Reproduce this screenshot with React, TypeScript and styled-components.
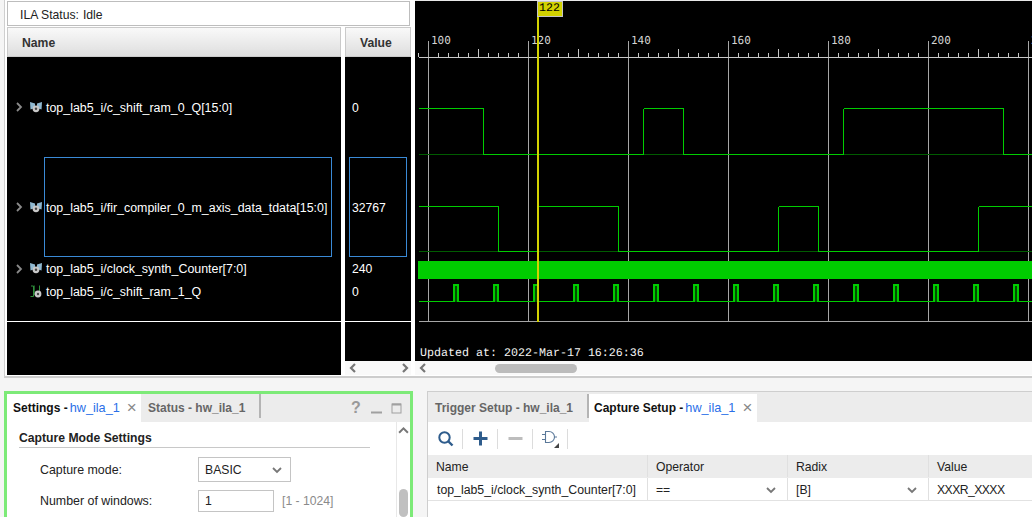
import React from "react";
import styled, { createGlobalStyle } from "styled-components";

const Global = createGlobalStyle`
  html, body { margin: 0; padding: 0; background: #f5f5f5; }
  * { box-sizing: border-box; }
  body { font-family: "Liberation Sans", Arial, sans-serif; font-size: 12.2px; }
`;

const Page = styled.div`
  width: 1032px; height: 517px; overflow: hidden; background: #f5f5f5;
  display: flex; flex-direction: column;
`;
const Top = styled.div`
  height: 378px; margin-left: 4px; padding-left: 2px; background: #fff; flex: none;
  border-left: 1px solid #cfcfcf; border-bottom: 2px solid #cdcdcd; display: flex;
`;
const LeftGroup = styled.div`width: 404px; flex: none; display: flex; flex-direction: column;`;
const StatusBox = styled.div`
  width: 403px; height: 25px; margin-top: 1px; margin-bottom: 1px; padding: 2px 0 0 12px;
  border: 1px solid #bdbdbd; background: #fff; display: flex; align-items: center; gap: 4px; color: #222;
`;
const Columns = styled.div`display: flex; gap: 4px; height: 348px;`;
const Column = styled.div<{ $w: number }>`width: ${p => p.$w}px; display: flex; flex-direction: column;`;
const HeaderCell = styled.div<{ $pad: number }>`
  height: 30px; flex: none; padding: 2px 0 0 ${p => p.$pad}px; display: flex; align-items: center;
  font-weight: bold; color: #333; border: 1px solid #cacaca;
  background: linear-gradient(#f9f9f9, #dedede);
`;
const BlackArea = styled.div`flex: 1; background: #000; min-height: 0;`;
const Rows = styled.div`height: 265px; border-bottom: 1px solid #fff;`;
const NameRow = styled.div<{ $h: number }>`height: ${p => p.$h}px; display: flex; align-items: stretch; color: #fff;`;
const Slot = styled.div<{ $w: number }>`width: ${p => p.$w}px; flex: none; display: flex; align-items: center; justify-content: flex-end;`;
const NameLabel = styled.div<{ $sel?: boolean; $tall?: boolean }>`
  width: 288px; margin-left: 2px; padding: ${p => (p.$tall ? 2 : 0)}px 0 0 1px; display: flex; align-items: center; white-space: nowrap;
  font-size: 12.42px;
  border: 1px solid ${p => (p.$sel ? "#3a8ad6" : "transparent")};
`;
const ValueLabel = styled(NameLabel)`width: 58px; margin: 0 0 0 4px; padding-left: 2px; font-size: 12.2px;`;
const HScroll = styled.div`
  height: 14px; flex: none; background: #f9f9f9; display: flex; align-items: center; justify-content: space-between; padding: 0 1px 0 3px;
`;
const WaveCol = styled.div`margin-left: 4px; flex: 1; display: flex; flex-direction: column; min-width: 0;`;
const WaveSvg = styled.svg`display: block; width: 617px; height: 361px; flex: none; background: #000;`;
const WaveScroll = styled.div`height: 14px; flex: none; background: #f9f9f9; display: flex; align-items: center; padding-left: 3px;`;
const Thumb = styled.div`width: 82px; height: 9px; margin-left: 67px; background: #bcbcbc; border-radius: 5px;`;

const Bottom = styled.div`flex: none; height: 126px; margin-top: 13px; display: flex;`;
const SettingsPanel = styled.div`
  width: 409px; margin-left: 4px; flex: none; background: #fff; display: flex; flex-direction: column;
  border: 3px solid #7dea78; border-bottom: none;
`;
const TabBar = styled.div`height: 28px; flex: none; background: #ececec; display: flex; align-items: stretch; font-size: 12px;`;
const Tab = styled.div<{ $active?: boolean; $w: number; $pad: number }>`
  width: ${p => p.$w}px; flex: none; padding-left: ${p => p.$pad}px; display: flex; align-items: center; gap: 2px; white-space: nowrap;
  font-weight: bold; color: ${p => (p.$active ? "#111" : "#666")}; background: ${p => (p.$active ? "#fff" : "transparent")};
`;
const TabLink = styled.span`font-weight: normal; font-size: 12.7px; color: #2a6fe8;`;
const TabClose = styled.span`font-weight: normal; font-size: 17px; line-height: 12px; color: #888; margin-left: 5px;`;
const TabDivider = styled.div`width: 2px; height: 24px; background: #b4b4b4; flex: none;`;
const PanelTools = styled.div`margin-left: auto; padding-right: 8px; display: flex; align-items: center; gap: 9px; color: #999;`;
const Help = styled.span`font-weight: bold; font-size: 16px; width: 10px; text-align: center; margin-right: 1px;`;
const SettingsBody = styled.div`flex: 1; display: flex; min-height: 0;`;
const Form = styled.div`flex: 1; padding-top: 9px; min-width: 0;`;
const Heading = styled.div`
  margin-left: 12px; width: 351px; height: 17px; font-weight: bold; color: #222; border-bottom: 1px solid #c8c8c8; line-height: 15px;
`;
const Field = styled.div<{ $mt: number }>`
  margin: ${p => p.$mt}px 0 0 33px; display: flex; align-items: center; color: #222;
`;
const FieldLabel = styled.div`width: 158px; flex: none; font-size: 12.4px;`;
const SelectBox = styled.div`
  width: 93px; height: 25px; border: 1px solid #c4c4c4; padding: 0 8px 0 6px; display: flex; align-items: center; justify-content: space-between; color: #222;
`;
const InputBox = styled.div`width: 76px; height: 22px; border: 1px solid #c4c4c4; padding-left: 6px; display: flex; align-items: center; color: #222;`;
const Range = styled.div`margin-left: 8px; color: #8a8a8a;`;
const VScroll = styled.div`width: 14px; flex: none; border-left: 1px solid #e8e8e8; display: flex; flex-direction: column; align-items: center; padding-top: 3px;`;
const VIcon = styled.div`height: 11px; flex: none; line-height: 0;`;
const VThumb = styled.div`width: 9px; height: 28px; margin-top: 53px; background: #c0c0c0; border-radius: 5px; flex: none;`;

const SetupPanel = styled.div`
  margin-left: 14px; flex: 1; min-width: 0; background: #fff; border-top: 1px solid #cecece; border-left: 1px solid #cecece;
  display: flex; flex-direction: column;
`;
const SetupTabs = styled.div`height: 30px; flex: none; background: #ececec; padding-top: 2px; display: flex; align-items: stretch; font-size: 12px;`;
const Toolbar = styled.div`height: 33px; flex: none; display: flex; align-items: center;`;
const ToolButton = styled.div`
  width: 35px; height: 20px; flex: none; display: flex; align-items: center; justify-content: center; border-right: 1px solid #dcdcdc;
`;
const TableRow = styled.div<{ $head?: boolean }>`
  display: grid; grid-template-columns: 220px 140px 141px 1fr; flex: none;
  height: 23px; background: ${p => (p.$head ? "#ececec" : "#fff")};
  border-bottom: 1px solid ${p => (p.$head ? "#ececec" : "#e2e2e2")};
`;
const Cell = styled.div`
  padding: 2px 11px 0 8px; display: flex; align-items: center; justify-content: space-between; white-space: nowrap; color: #222;
  border-right: 1px solid #e0e0e0; &:last-child { border-right: none; }
`;
const SignalText = styled.span`font-size: 12.3px; margin-left: 1px;`;
const PatternText = styled.span`letter-spacing: -0.55px;`;

const Chevron = ({ dir = "down", color = "#777", size = 10, weight = 1.8 }: { dir?: "down" | "up" | "left" | "right"; color?: string; size?: number; weight?: number }) => {
  const pts = { down: "1,3 5,7 9,3", up: "1,7 5,3 9,7", left: "7,1 3,5 7,9", right: "3,1 7,5 3,9" }[dir];
  return (
    <svg width={size} height={size} viewBox="0 0 10 10">
      <polyline points={pts} fill="none" stroke={color} strokeWidth={weight} />
    </svg>
  );
};

const Gear = ({ cx, cy }: { cx: number; cy: number }) => (
  <>
    <circle cx={cx} cy={cy} r="3.4" fill="#c8c8c8" />
    <circle cx={cx} cy={cy} r="1.2" fill="#444" />
  </>
);
const BusIcon = () => (
  <svg width="12" height="11" viewBox="0 0 12 11">
    <path d="M0 0 L5 1.5 L5 6 L0.5 7.5 Z" fill="#8fb8d0" />
    <path d="M12 0 L7 1.5 L7 6 L11.5 7.5 Z" fill="#8fb8d0" />
    <Gear cx={6} cy={6.8} />
  </svg>
);
const BitIcon = () => (
  <svg width="12" height="13" viewBox="0 0 12 13">
    <path d="M0.5 11.5 H3.5 V1 H1" fill="none" stroke="#2f8f3a" strokeWidth="1" />
    <path d="M9.5 0.5 V6" fill="none" stroke="#2f8f3a" strokeWidth="1" />
    <path d="M4.5 0.5 V10" fill="none" stroke="#1d5c26" strokeWidth="1" />
    <Gear cx={8} cy={9} />
  </svg>
);
const SearchIcon = () => (
  <svg width="17" height="17" viewBox="0 0 17 17">
    <circle cx="7.5" cy="7.5" r="5.2" fill="none" stroke="#2e5c8c" strokeWidth="2" />
    <path d="M11.5 11.5 L15.5 15.5" stroke="#2e5c8c" strokeWidth="2.4" />
  </svg>
);
const PlusIcon = () => (
  <svg width="15" height="15" viewBox="0 0 15 15">
    <path d="M7.5 0.5 V14.5 M0.5 7.5 H14.5" stroke="#2e5c8c" strokeWidth="3" />
  </svg>
);
const MinusIcon = () => (
  <svg width="15" height="15" viewBox="0 0 15 15">
    <path d="M0.5 7.5 H14.5" stroke="#bdbdbd" strokeWidth="3" />
  </svg>
);
const GateIcon = () => (
  <svg width="20" height="20" viewBox="0 0 20 20">
    <path d="M5.5 2.5 H9 A5.5 5.5 0 0 1 9 13.5 H5.5 Z" fill="none" stroke="#5a7899" strokeWidth="1.1" />
    <path d="M2 5.5 H5.5 M2 10.5 H5.5 M14.5 8 H17" stroke="#5a7899" strokeWidth="1.1" />
    <path d="M19 14 V19 H14 Z" fill="#444" />
  </svg>
);
const MinimizeIcon = () => (
  <svg width="11" height="12" viewBox="0 0 11 12"><path d="M0 10.5 H11" stroke="#a0a0a0" strokeWidth="2" /></svg>
);
const MaximizeIcon = () => (
  <svg width="11" height="11" viewBox="0 0 11 11">
    <rect x="1" y="1" width="9" height="9" fill="none" stroke="#a0a0a0" strokeWidth="1" />
    <path d="M1 1.5 H10" stroke="#a0a0a0" strokeWidth="2" />
  </svg>
);

const signals = [
  { h: 100, name: "top_lab5_i/c_shift_ram_0_Q[15:0]", value: "0", bus: true, sel: false },
  { h: 100, name: "top_lab5_i/fir_compiler_0_m_axis_data_tdata[15:0]", value: "32767", bus: true, sel: true },
  { h: 23, name: "top_lab5_i/clock_synth_Counter[7:0]", value: "240", bus: true, sel: false },
  { h: 23, name: "top_lab5_i/c_shift_ram_1_Q", value: "0", bus: false, sel: false },
];

const GREEN = "#00cc00";
const DARK = "#005c00";
const ox = 415;
const px = (x: number) => x - ox + 0.5;

const step = (hi: number, lo: number, edges: number[], startHigh: boolean) => {
  const xs = [418, ...edges, 1032];
  let d = "";
  let dark = "";
  let high = startHigh;
  for (let i = 0; i < xs.length - 1; i++) {
    const a = px(xs[i]);
    const b = px(xs[i + 1]);
    d += `M${a} ${high ? hi + 0.5 : lo + 0.5} H${b} `;
    if (i < xs.length - 2) d += `M${b} ${hi + 0.5} V${lo + 0.5} `;
    if (high) dark += `M${a} ${lo + 0.5} H${b} `;
    high = !high;
  }
  return { d, dark };
};

const row1 = step(108, 154, [483, 643, 683, 843, 1003], true);
const row2 = step(206, 251, [498, 538, 618, 778, 818, 978], true);
const pulses = Array.from({ length: 15 }, (_, i) => 453 + i * 40);
const labels = [100, 120, 140, 160, 180, 200, 220];
const ticks = Array.from({ length: 62 }, (_, i) => 418 + i * 10);

const Wave = () => (
  <WaveSvg viewBox="0 0 617 361" shapeRendering="crispEdges">
    <rect x="0" y="0" width="617" height="1" fill="#e8e8e8" />
    {labels.map(l => {
      const x = 428 + (l - 100) * 5;
      return (
        <g key={l}>
          <path d={`M${px(x)} 41 V321`} stroke="#a6a6a6" />
          <text x={x - ox + 3} y={44} fill="#d4d4d4" fontFamily="'DejaVu Sans Mono', monospace" fontSize="11" textRendering="geometricPrecision">{l}</text>
        </g>
      );
    })}
    <path d={`M${px(418)} 57.5 H617`} stroke="#c8c8c8" />
    {ticks.map(x => {
      if ((x - 428) % 100 === 0) return null;
      const h = (x - 478) % 100 === 0 ? 8 : 4;
      return <path key={x} d={`M${px(x)} ${57 - h} V57`} stroke="#c8c8c8" />;
    })}
    <path d={`M${px(418)} 321.5 H617`} stroke="#a6a6a6" />

    <path d={row1.dark} stroke={DARK} fill="none" />
    <path d={row1.d} stroke={GREEN} fill="none" />
    <path d={row2.dark} stroke={DARK} fill="none" />
    <path d={row2.d} stroke={GREEN} fill="none" />
    <rect x={418 - ox} y={261} width={614} height={18} fill={GREEN} />
    <path d={`M${px(418)} 301.5 H617`} stroke={GREEN} />
    {pulses.map(x => (
      <g key={x}>
        <rect x={x - ox} y={284} width={6} height={18} fill={GREEN} />
        <rect x={x - ox + 2} y={286} width={2} height={16} fill="#004c00" />
      </g>
    ))}
    <rect x={537 - ox} y={16} width={2} height={306} fill="#d2d200" />
    <rect x={537 - ox + 0.5} y={1.5} width={25} height={15} fill="#d2d200" stroke="#c4c4c4" />
    <text x={539 - ox} y={11} fill="#000" fontFamily="'Liberation Mono', monospace" fontSize="11.6" textRendering="geometricPrecision">122</text>
    <text x={420 - ox} y={356} fill="#f4f4f4" fontFamily="'Liberation Mono', monospace" fontSize="11.67" textRendering="geometricPrecision">Updated at: 2022-Mar-17 16:26:36</text>
  </WaveSvg>
);

export default function App() {
  return (
    <Page>
      <Global />
      <Top>
        <LeftGroup>
          <StatusBox><span>ILA Status:</span><span>Idle</span></StatusBox>
          <Columns>
            <Column $w={334}>
              <HeaderCell $pad={14}>Name</HeaderCell>
              <BlackArea>
                <Rows>
                  {signals.map(s => (
                    <NameRow key={s.name} $h={s.h}>
                      <Slot $w={17}>{s.bus && <Chevron dir="right" color="#8a8a8a" />}</Slot>
                      <Slot $w={18}>{s.bus ? <BusIcon /> : <BitIcon />}</Slot>
                      <NameLabel $sel={s.sel} $tall={s.h > 50}>{s.name}</NameLabel>
                    </NameRow>
                  ))}
                </Rows>
              </BlackArea>
            </Column>
            <Column $w={66}>
              <HeaderCell $pad={14}>Value</HeaderCell>
              <BlackArea>
                <Rows>
                  {signals.map(s => (
                    <NameRow key={s.name} $h={s.h}>
                      <ValueLabel $sel={s.sel} $tall={s.h > 50}>{s.value}</ValueLabel>
                    </NameRow>
                  ))}
                </Rows>
              </BlackArea>
              <HScroll><Chevron dir="left" weight={2.2} /><Chevron dir="right" weight={2.2} /></HScroll>
            </Column>
          </Columns>
        </LeftGroup>
        <WaveCol>
          <Wave />
          <WaveScroll><Chevron dir="left" weight={2.2} /><Thumb /></WaveScroll>
        </WaveCol>
      </Top>
      <Bottom>
        <SettingsPanel>
          <TabBar>
            <Tab $active $w={134} $pad={6}>Settings - <TabLink>hw_ila_1</TabLink><TabClose>×</TabClose></Tab>
            <Tab $w={118} $pad={7}>Status - hw_ila_1</Tab>
            <TabDivider />
            <PanelTools><Help>?</Help><MinimizeIcon /><MaximizeIcon /></PanelTools>
          </TabBar>
          <SettingsBody>
            <Form>
              <Heading>Capture Mode Settings</Heading>
              <Field $mt={9}>
                <FieldLabel>Capture mode:</FieldLabel>
                <SelectBox>BASIC<Chevron /></SelectBox>
              </Field>
              <Field $mt={8}>
                <FieldLabel>Number of windows:</FieldLabel>
                <InputBox>1</InputBox>
                <Range>[1 - 1024]</Range>
              </Field>
            </Form>
            <VScroll><VIcon><Chevron dir="up" size={11} /></VIcon><VThumb /></VScroll>
          </SettingsBody>
        </SettingsPanel>
        <SetupPanel>
          <SetupTabs>
            <Tab $w={159} $pad={7}>Trigger Setup - hw_ila_1</Tab>
            <TabDivider />
            <Tab $active $w={168} $pad={5}>Capture Setup - <TabLink>hw_ila_1</TabLink><TabClose>×</TabClose></Tab>
          </SetupTabs>
          <Toolbar>
            <ToolButton><SearchIcon /></ToolButton>
            <ToolButton><PlusIcon /></ToolButton>
            <ToolButton><MinusIcon /></ToolButton>
            <ToolButton><GateIcon /></ToolButton>
          </Toolbar>
          <TableRow $head>
            <Cell>Name</Cell><Cell>Operator</Cell><Cell>Radix</Cell><Cell>Value</Cell>
          </TableRow>
          <TableRow>
            <Cell><SignalText>top_lab5_i/clock_synth_Counter[7:0]</SignalText></Cell>
            <Cell>==<Chevron /></Cell>
            <Cell>[B]<Chevron /></Cell>
            <Cell><PatternText>XXXR_XXXX</PatternText></Cell>
          </TableRow>
        </SetupPanel>
      </Bottom>
    </Page>
  );
}
